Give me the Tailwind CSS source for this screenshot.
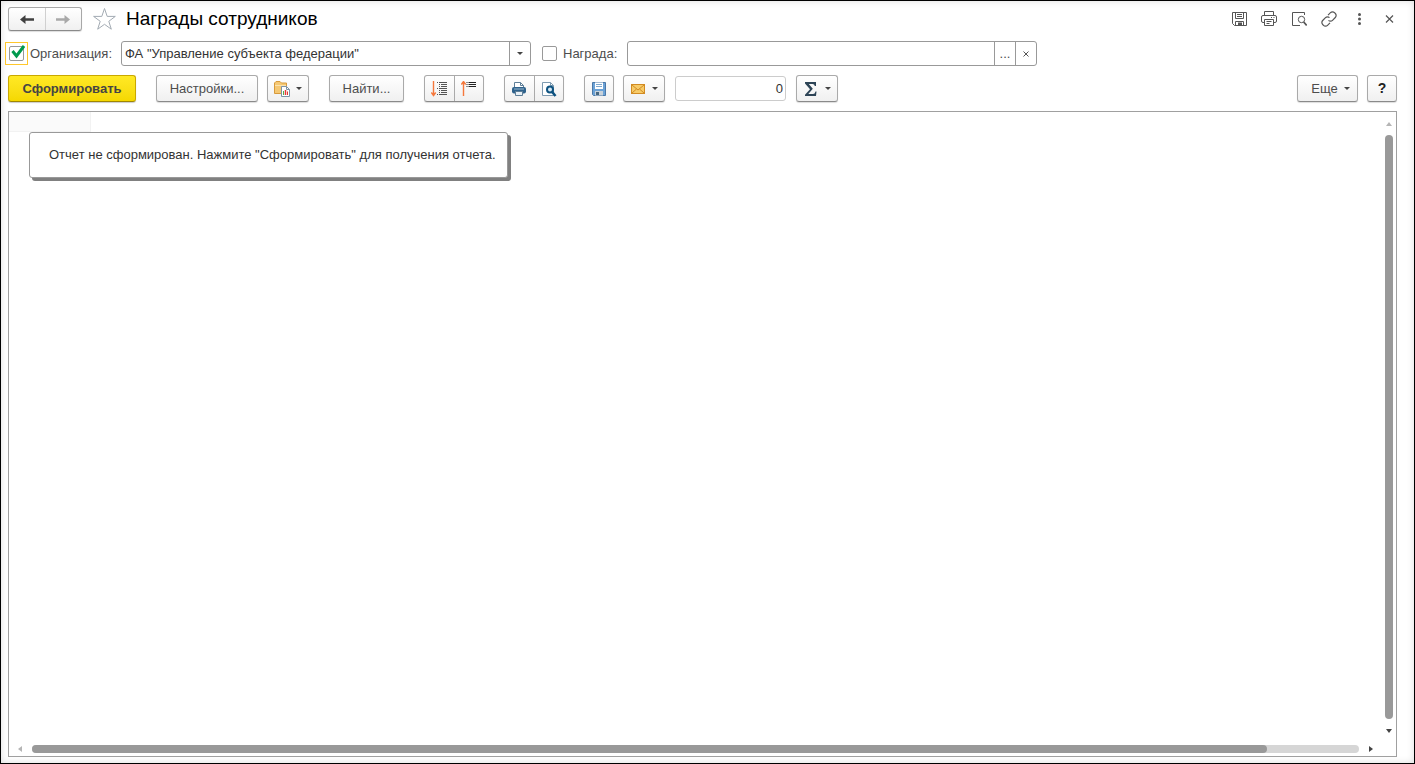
<!DOCTYPE html>
<html lang="ru">
<head>
<meta charset="utf-8">
<meta name="viewport" content="width=device-width, initial-scale=1">
<title>Награды сотрудников</title>
<script src="https://cdn.jsdelivr.net/npm/@tailwindcss/browser@4"></script>
</head>
<body class="flex min-h-screen flex-col border border-black bg-white pl-[7px] pr-[17px] pb-[6px] font-['Liberation_Sans',Arial,sans-serif] text-[13px] text-[#4d4d4d] shadow-[inset_0_0_7px_#ddd]">

<!-- Title bar -->
<header class="flex h-9 items-center">
  <div class="flex h-6 w-[74px] rounded-[3px] border border-[#a8a8a8] border-b-[#8a8a8a] bg-linear-to-b from-white to-[#f0f0f0] shadow-[0_1px_1px_#ddd]">
    <button aria-label="Назад" class="flex flex-1 items-center justify-center border-r border-[#d0d0d0]">
      <svg class="h-[11px] w-[14px]" viewBox="0 0 14 11"><path d="M14 4.300H5.500V1L0 5.500 5.500 10V6.700H14z" fill="#404040"/></svg>
    </button>
    <button aria-label="Вперед" class="flex flex-1 items-center justify-center">
      <svg class="h-[11px] w-[14px]" viewBox="0 0 14 11"><path d="M0 4.300h8.500V1L14 5.500 8.500 10V6.700H0z" fill="#a9a9a9"/></svg>
    </button>
  </div>
  <button aria-label="В избранное" class="ml-[10px]">
    <svg class="h-6 w-6" viewBox="0 0 24 24"><path d="M12.500 1.500l2.700 7.900h8.100l-6.500 4.900 2.500 7.900-6.800-4.900-6.800 4.900 2.500-7.900L1.600 9.400h8.200z" fill="#fff" stroke="#a3abb3"/></svg>
  </button>
  <h1 class="ml-[10px] text-[19px] leading-6 text-black">Награды сотрудников</h1>
  <div class="ml-auto flex items-center gap-[14px] text-[#555]">
    <button aria-label="Сохранить"><svg class="size-4" viewBox="0 0 16 16" fill="none" stroke="currentColor"><path d="M1.500 1.500h14v13h-12l-2-2zM4.500 1.500v6h8v-6M6 3.500h5M6 5.500h5M4.500 14.500v-4h8v4"/><path d="M7 11.500h4v3H7z" fill="currentColor" stroke="none"/></svg></button>
    <button aria-label="Печать"><svg class="size-4" viewBox="0 0 16 16" fill="none" stroke="currentColor"><path d="M3.500 4.500v-4h9v4M3.500 11.500H2a1.500 1.500 0 0 1-1.500-1.500V6A1.500 1.500 0 0 1 2 4.500h12A1.500 1.500 0 0 1 15.500 6v4a1.500 1.500 0 0 1-1.500 1.500h-1.500M3.500 8.500h9v6h-9zM5.500 10.500h5M5.500 12.500h3M10 6.500h1M12.500 6.500h1"/></svg></button>
    <button aria-label="Предварительный просмотр"><svg class="size-4" viewBox="0 0 16 16" fill="none" stroke="currentColor"><path d="M13.500 4V1.500h-12v13H9"/><circle cx="10.500" cy="8.500" r="3.200"/><path d="M12.700 11l3 3.500" stroke-width="1.800"/></svg></button>
    <button aria-label="Получить ссылку"><svg class="size-4" viewBox="0 0 16 16" fill="none" stroke="currentColor" stroke-width="1.200"><path d="M7 4.200l2.500-2.500a2.800 2.800 0 0 1 4 0l.8.8a2.800 2.800 0 0 1 0 4L11.500 9.300a2.800 2.800 0 0 1-4 0M9 11.800l-2.500 2.500a2.800 2.800 0 0 1-4 0l-.8-.8a2.800 2.800 0 0 1 0-4L4.500 6.700a2.800 2.800 0 0 1 4 0"/></svg></button>
    <button aria-label="Меню"><svg class="size-4" viewBox="0 0 16 16" fill="currentColor"><circle cx="8.500" cy="3.500" r="1.500"/><circle cx="8.500" cy="8" r="1.500"/><circle cx="8.500" cy="12.500" r="1.500"/></svg></button>
    <button aria-label="Закрыть"><svg class="size-4" viewBox="0 0 16 16" fill="none" stroke="currentColor" stroke-width="1.200"><path d="M5 4.500l7 7M12 4.500l-7 7"/></svg></button>
  </div>
</header>

<!-- Filters -->
<div class="mt-1 flex h-[25px] items-center">
  <span class="-ml-[3px] flex size-[23px] items-center justify-center border border-[#ffc72c]">
    <span class="relative flex size-[15px]">
      <input id="use-org" type="checkbox" checked class="size-[15px] appearance-none rounded-[2px] border border-[#999] bg-white">
      <svg class="pointer-events-none absolute -top-px left-[2px] h-[14px] w-[14px]" viewBox="0 0 14 14"><path d="M1.500 6l4 5L13 1" fill="none" stroke="#009a4e" stroke-width="3"/></svg>
    </span>
  </span>
  <label for="use-org" class="ml-[2px] w-[91px]">Организация:</label>
  <div class="relative flex h-[25px] w-[410px]">
    <select aria-label="Организация" class="w-full appearance-none rounded-[3px] border border-[#999] bg-white pl-[3px] text-[#333]">
      <option>ФА "Управление субъекта федерации"</option>
    </select>
    <span class="pointer-events-none absolute inset-y-0 right-0 flex w-[22px] items-center justify-center border-l border-[#999] pr-[2px]">
      <svg class="h-[3px] w-[6px]" viewBox="0 0 6 3"><path d="M0 0h6L3 3z" fill="#444"/></svg>
    </span>
  </div>
  <input id="use-award" type="checkbox" class="ml-[11px] size-[15px] appearance-none rounded-[2px] border border-[#999] bg-white">
  <label for="use-award" class="ml-[6px] w-[64px]">Награда:</label>
  <div class="flex h-[25px] w-[410px] rounded-[3px] border border-[#999] bg-white">
    <input aria-label="Награда" type="text" class="min-w-0 flex-1 px-1 text-[#333] outline-none">
    <button aria-label="Выбрать" class="w-[21px] border-l border-[#999]">...</button>
    <button aria-label="Очистить" class="flex w-[21px] items-center justify-center border-l border-[#999]"><svg class="size-[6px]" viewBox="0 0 6 6"><path d="M.5.5l5 5M5.500.5l-5 5" stroke="#555"/></svg></button>
  </div>
</div>

<!-- Command bar -->
<div class="mt-[9px] flex h-[27px] [&_button]:flex [&_button]:items-center [&_button]:justify-center">
  <button class="w-32 rounded-[3px] border border-[#c9a800] border-b-[#a08600] bg-linear-to-b from-[#ffe924] to-[#f5d800] font-bold text-[#444] shadow-[0_1px_1px_#ccc]">Сформировать</button>
  <button class="ml-5 w-[102px] rounded-[3px] border border-[#aaa] border-b-[#8a8a8a] bg-linear-to-b from-white to-[#f0f0f0] shadow-[0_1px_1px_#ddd]">Настройки...</button>
  <button aria-label="Варианты отчета" class="ml-[9px] w-[42px] gap-[6px] rounded-[3px] border border-[#aaa] border-b-[#8a8a8a] bg-linear-to-b from-white to-[#f0f0f0] shadow-[0_1px_1px_#ddd]">
    <svg class="size-4" viewBox="0 0 16 16"><path d="M.5 12.500V2L2 .5h4L7.500 2h5v10.500z" fill="#f5c873" stroke="#d79a3c"/><path d="M1 4.500h11" stroke="#fbe3b0"/><path d="M7.500 5.500h5l3 3v7h-8z" fill="#fff" stroke="#7d93a6"/><path d="M12.500 5.500v3h3" fill="none" stroke="#7d93a6"/><path d="M9.500 10v4" stroke="#4caf50"/><path d="M11.500 9v5" stroke="#e53935" stroke-width="1.500"/><path d="M13.500 10.500V14" stroke="#e53935"/></svg>
    <svg class="h-[3px] w-[6px]" viewBox="0 0 6 3"><path d="M0 0h6L3 3z" fill="#444"/></svg>
  </button>
  <button class="ml-5 w-[75px] rounded-[3px] border border-[#aaa] border-b-[#8a8a8a] bg-linear-to-b from-white to-[#f0f0f0] shadow-[0_1px_1px_#ddd]">Найти...</button>
  <div class="ml-5 flex w-[60px] rounded-[3px] border border-[#aaa] border-b-[#8a8a8a] bg-linear-to-b from-white to-[#f0f0f0] shadow-[0_1px_1px_#ddd]">
    <button aria-label="Развернуть группы" class="flex-1 border-r border-[#aaa]"><svg class="h-4 w-[16px]" viewBox="0 0 16 16"><path d="M2.500 0v14M.3 11.500l2.200 3 2.200-3" fill="none" stroke="#f5783c" stroke-width="1.400"/><path d="M6 1.500h1M8 1.500h8M8 3.500h1M10 3.500h6M8 5.500h1M10 5.500h6M6 7.500h1M8 7.500h8M8 9.500h1M10 9.500h6M8 11.500h1M10 11.500h6M6 13.500h1M8 13.500h8" stroke="#555"/></svg></button>
    <button aria-label="Свернуть группы" class="flex-1"><svg class="h-4 w-[16px]" viewBox="0 0 16 16"><path d="M2.500 1v14M.3 3.500l2.200-3 2.200 3" fill="none" stroke="#f5783c" stroke-width="1.400"/><path d="M5.500 1.500h1M7.500 1.500H15M5.500 3.500h1M7.500 3.500H15M5.500 5.500h1M7.500 5.500H15" stroke="#222"/></svg></button>
  </div>
  <div class="ml-5 flex w-[60px] rounded-[3px] border border-[#aaa] border-b-[#8a8a8a] bg-linear-to-b from-white to-[#f0f0f0] shadow-[0_1px_1px_#ddd]">
    <button aria-label="Печать отчета" class="flex-1 border-r border-[#aaa]"><svg class="size-4" viewBox="0 0 16 16"><path d="M3.500 7V1.500h6l3 3V7" fill="#fff" stroke="#5f7f98"/><path d="M9.500 1.500v3h3" fill="none" stroke="#5f7f98"/><rect x="1" y="6" width="14" height="6.500" rx="2" fill="#2f628c"/><path d="M3 8h10" stroke="#9dbad0"/><path d="M4.500 10.500h7v4h-7z" fill="#e8f0f6" stroke="#5f7f98"/></svg></button>
    <button aria-label="Просмотр" class="flex-1"><svg class="size-4" viewBox="0 0 16 16"><path d="M1.500 14.500V1.500h8l3 3v10z" fill="#fff" stroke="#7d9ab0"/><path d="M9.500 1.500v3h3" fill="none" stroke="#7d9ab0"/><circle cx="9" cy="8.500" r="3" fill="#d9e9f4" stroke="#0d5280" stroke-width="2"/><path d="M11.200 11l3.300 4" stroke="#0d5280" stroke-width="2.600"/></svg></button>
  </div>
  <button aria-label="Сохранить отчет" class="ml-5 w-[30px] rounded-[3px] border border-[#aaa] border-b-[#8a8a8a] bg-linear-to-b from-white to-[#f0f0f0] shadow-[0_1px_1px_#ddd]">
    <svg class="size-4" viewBox="0 0 16 16"><path d="M1.500 1.500h13v13h-12l-1-1z" fill="#6ba2d6" stroke="#4a78a8"/><path d="M4 1.500h8V8H4z" fill="#fff"/><path d="M5 3.500h6M5 5.500h6" stroke="#7da7cc"/><path d="M4 10h8v4.500H4z" fill="#c9d2da"/><path d="M5 11h3v3H5z" fill="#46667f"/></svg>
  </button>
  <button aria-label="Отправить по почте" class="ml-[9px] w-[42px] gap-[6px] rounded-[3px] border border-[#aaa] border-b-[#8a8a8a] bg-linear-to-b from-white to-[#f0f0f0] shadow-[0_1px_1px_#ddd]">
    <svg class="size-4" viewBox="0 0 16 16"><rect x="1.500" y="3.500" width="13" height="9" fill="#f7cb68" stroke="#d28b22"/><path d="M2 4l6 5 6-5M2 12l4.500-4M14 12L9.500 8" fill="none" stroke="#d28b22"/></svg>
    <svg class="h-[3px] w-[6px]" viewBox="0 0 6 3"><path d="M0 0h6L3 3z" fill="#444"/></svg>
  </button>
  <input aria-label="Сумма выделенных ячеек" type="text" value="0" class="ml-[10px] mt-px h-[25px] w-[111px] rounded-[3px] border border-[#ccc] bg-white px-[2px] text-right text-[#333]">
  <button aria-label="Показатель" class="ml-[10px] w-[42px] gap-[6px] rounded-[3px] border border-[#aaa] border-b-[#8a8a8a] bg-linear-to-b from-white to-[#f0f0f0] shadow-[0_1px_1px_#ddd]">
    <svg class="size-4" viewBox="0 0 16 16"><path d="M2 1h11v4h-1.200Q11.500 3 9.500 3H5.800l4 4.800L5.300 13H10q2 0 2.500-2.500h1L13 15H2v-1.300L7 8.300 2 2.500z" fill="#2d4456"/></svg>
    <svg class="h-[3px] w-[6px]" viewBox="0 0 6 3"><path d="M0 0h6L3 3z" fill="#444"/></svg>
  </button>
  <button class="ml-auto w-[61px] gap-[6px] rounded-[3px] border border-[#aaa] border-b-[#8a8a8a] bg-linear-to-b from-white to-[#f0f0f0] pl-[6px] shadow-[0_1px_1px_#ddd]">Еще
    <svg class="h-[3px] w-[6px]" viewBox="0 0 6 3"><path d="M0 0h6L3 3z" fill="#444"/></svg>
  </button>
  <button aria-label="Справка" class="ml-[9px] w-[30px] rounded-[3px] border border-[#aaa] border-b-[#8a8a8a] bg-linear-to-b from-white to-[#f0f0f0] text-[14px] font-bold text-[#222] shadow-[0_1px_1px_#ddd]">?</button>
</div>

<!-- Report area -->
<main class="mt-[9px] flex flex-1 flex-col border border-[#a0a0a0] bg-white">
  <div class="flex flex-1">
    <div class="flex flex-1 flex-col items-start">
      <div class="h-5 w-[82px] border-r border-b border-[#f2f2f2] bg-[#fafafa]"></div>
      <p class="ml-5 rounded-[3px] border border-[#999] bg-white py-3 pl-[19px] pr-[11px] leading-5 text-[#333] shadow-[3px_3px_0_#808080]">Отчет не сформирован. Нажмите "Сформировать" для получения отчета.</p>
    </div>
    <div class="mr-[3px] flex w-2 flex-col items-center pt-[10px]">
      <svg class="h-[4px] w-[6px]" viewBox="0 0 6 4"><path d="M0 4h6L3 0z" fill="#b5b5b5"/></svg>
      <div class="mt-[9px] w-2 flex-1 rounded-full bg-[#999]"></div>
      <svg class="mt-[10px] mb-[6px] h-[4px] w-[6px]" viewBox="0 0 6 4"><path d="M0 0h6L3 4z" fill="#444"/></svg>
    </div>
  </div>
  <div class="mt-[6px] mb-[3px] flex h-2 items-center pl-[9px] pr-[23px]">
    <svg class="h-[6px] w-[4px]" viewBox="0 0 4 6"><path d="M4 0v6L0 3z" fill="#b5b5b5"/></svg>
    <div class="ml-[10px] h-2 flex-1 rounded-full bg-[#d6d6d6]"><div class="h-2 rounded-full bg-[#999]" style="width:93.1%"></div></div>
    <svg class="ml-[10px] h-[6px] w-[4px]" viewBox="0 0 4 6"><path d="M0 0v6l4-3z" fill="#444"/></svg>
  </div>
</main>
</body>
</html>
